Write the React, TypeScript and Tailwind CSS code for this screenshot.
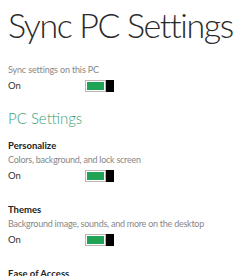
import React from "react";

function Toggle() {
  return (
    <div className="flex h-[12px] w-[29px] items-stretch">
      <div className="flex flex-1 border border-[#b8b8b8] bg-white p-[1px]">
        <div className="flex-1 bg-[#1fa354]" />
      </div>
      <div className="w-[8px] bg-black" />
    </div>
  );
}

function OnRow() {
  return (
    <div className="mt-[2px] flex h-[14px] items-center">
      <span className="w-[77px] text-[9.5px] leading-[14px] text-[#333]">On</span>
      <Toggle />
    </div>
  );
}

function Section({ title, desc, className }: { title: string; desc: string; className: string }) {
  return (
    <div className={className}>
      <div className="whitespace-nowrap text-[9.5px] font-bold leading-[14px] text-[#222]">{title}</div>
      <div className="whitespace-nowrap text-[9px] leading-[14px] tracking-[-0.25px] text-[#888]">{desc}</div>
      <OnRow />
    </div>
  );
}

export default function App() {
  return (
    <div
      className="h-[276px] w-[250px] overflow-hidden bg-white pl-[8px]"
      style={{ fontFamily: 'Lato, "Open Sans", sans-serif' }}
    >
      <div className="whitespace-nowrap pt-[5px] text-[34px] font-light leading-[40px] tracking-[-1.4px] text-[#2a2a2a]">
        Sync PC Settings
      </div>
      <div className="mt-[18px] whitespace-nowrap text-[9px] leading-[14px] tracking-[-0.15px] text-[#888]">
        Sync settings on this PC
      </div>
      <OnRow />
      <div className="mt-[15px] whitespace-nowrap text-[15px] font-light leading-[20px] text-[#3a9e74]">PC Settings</div>
      <Section className="mt-[11px]" title="Personalize" desc="Colors, background, and lock screen" />
      <Section className="mt-[20px]" title="Themes" desc="Background image, sounds, and more on the desktop" />
      <div className="mt-[20px] whitespace-nowrap text-[9.5px] font-bold leading-[14px] text-[#222]">Ease of Access</div>
    </div>
  );
}
